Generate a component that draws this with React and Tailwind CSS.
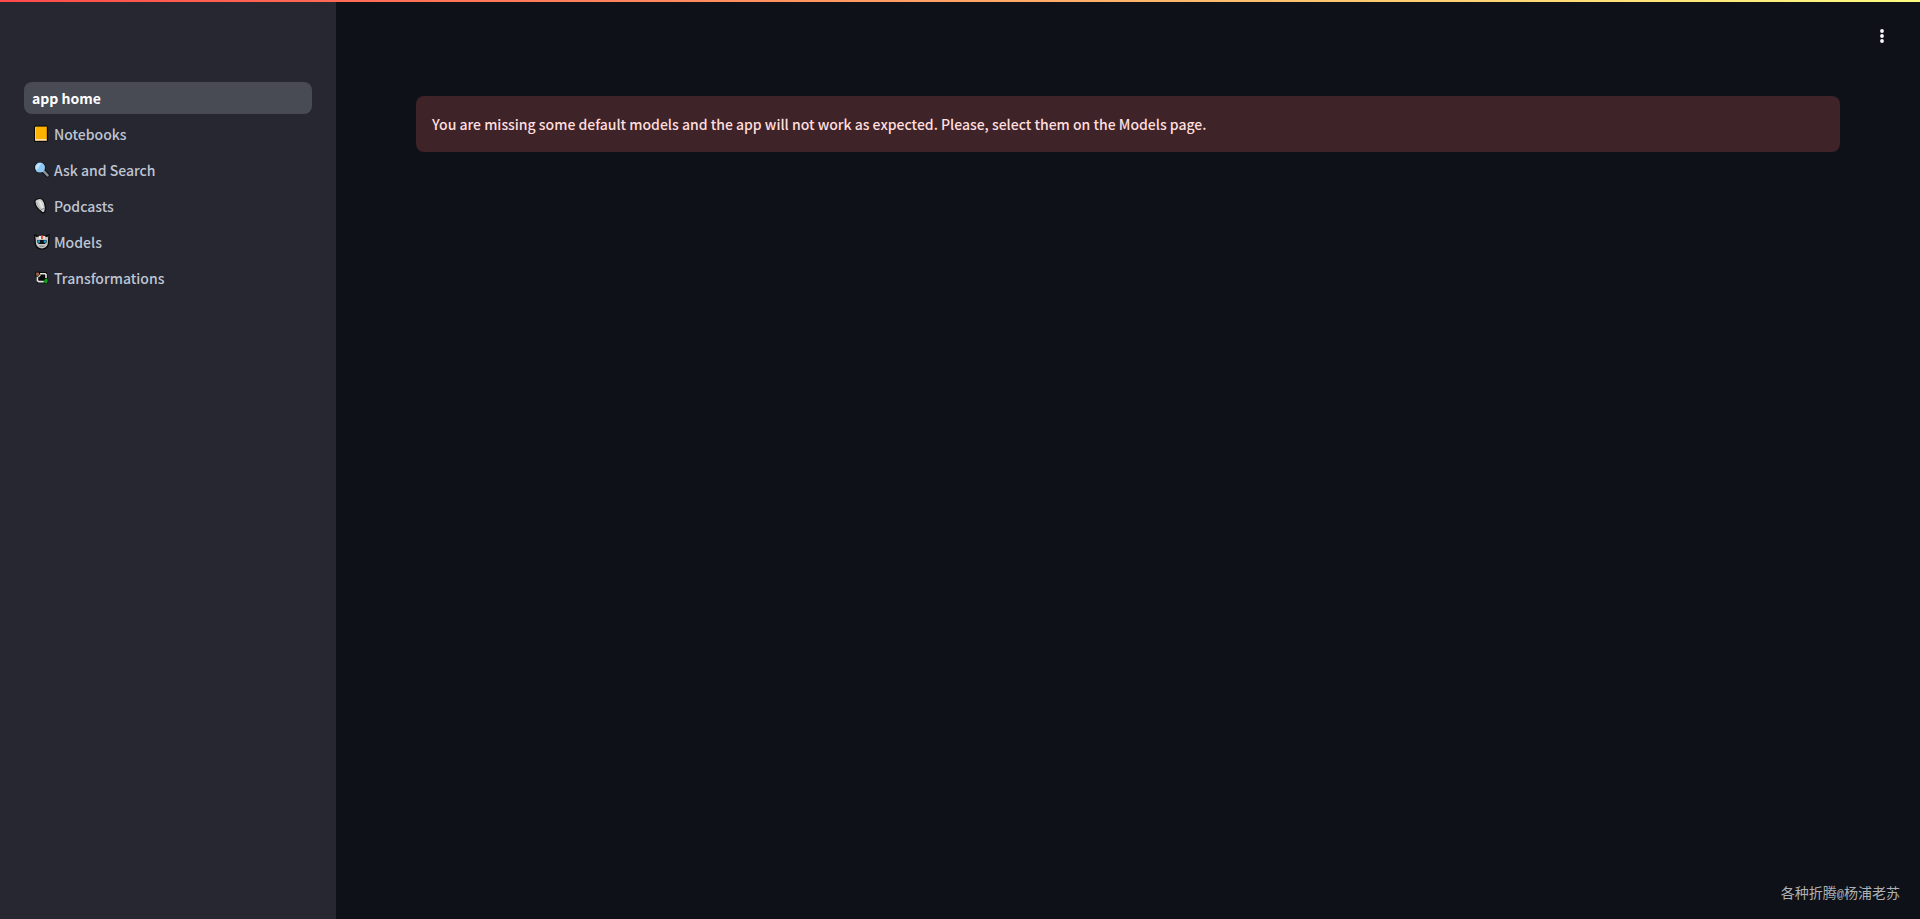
function NotebookIcon() {
  return (
    <svg viewBox="0 0 16 18" className="h-[18px] w-4" aria-hidden="true">
      <rect x="0" y="0.6" width="13.8" height="16.4" rx="1.6" fill="#0b0a08" />
      <rect x="1" y="1.800" width="1.400" height="14" fill="#ffcf60" />
      <rect x="2" y="1.600" width="10.800" height="12.600" fill="#ffb300" />
      <rect x="2" y="14" width="10.800" height="1.800" fill="#ffe0a0" />
    </svg>
  );
}

function SearchIcon() {
  return (
    <svg viewBox="0 0 16 18" className="h-[18px] w-4" aria-hidden="true">
      <path d="M9.400 10 13.400 14.200" stroke="#101214" strokeWidth="4.600" strokeLinecap="round" />
      <circle cx="6" cy="6.600" r="5.900" fill="#15181c" />
      <path d="M9.600 10.200 13.600 14.400" stroke="#84949a" strokeWidth="2.400" strokeLinecap="round" />
      <circle cx="6" cy="6.600" r="5" fill="#8fc8f2" />
      <path d="M1.800 7.800A4.600 4.600 0 0 1 7.400 2.200L2.800 9Z" fill="#c3e3fa" />
    </svg>
  );
}

function MicrophoneIcon() {
  return (
    <svg viewBox="0 0 16 18" className="h-[18px] w-4" aria-hidden="true">
      <path
        d="M1 3.600C2.600 1.200 6.800.8 8.800 2.800c1.800 2 2.800 5.600 2.600 9L10.800 14.600 8.800 16.200 6.600 14C3.200 11.600.6 7.800 1 3.600Z"
        fill="#d0d0d0"
        stroke="#0c0c0d"
        strokeWidth="1.200"
      />
      <path d="M2.400 5C3.200 8.600 4.800 11 6.600 12.600" stroke="#b8b8b9" strokeWidth="1.400" fill="none" />
      <path d="M5.600 4 8.600 11" stroke="#ececec" strokeWidth="1.600" />
      <path d="M7 12.600 11 11.200" stroke="#8d8d8f" strokeWidth="1" />
    </svg>
  );
}

function RobotIcon() {
  return (
    <svg viewBox="0 0 16 18" className="h-[18px] w-4" aria-hidden="true">
      <path
        d="M.7 1.800H1.600L2.600 3.400Q8 1.200 13 3.400L14 1.800H15L14.400 11Q13.400 15.600 7.900 16.200 2.400 15.600 1.300 11Z"
        fill="#c3c3c4"
        stroke="#09090a"
        strokeWidth="1.300"
      />
      <path d="M5 2.800H10.800V6H5Z" fill="#f1e8e8" />
      <path d="M7 2.400H9V6H7Z" fill="#f04a32" />
      <path d="M3.200 7H12.600V9.600L10.800 11H5L3.200 9.600Z" fill="#101315" />
      <rect x="3.600" y="7.400" width="2.400" height="2.200" fill="#19aee0" />
      <rect x="9.800" y="7.400" width="2.400" height="2.200" fill="#19aee0" />
      <path d="M5.600 13.200H10.400" stroke="#77797a" strokeWidth="1" />
    </svg>
  );
}

function CycleIcon() {
  return (
    <svg viewBox="0 0 16 18" className="h-[18px] w-4" aria-hidden="true">
      <path d="M.8 3 5 2.400 7 3.200 12.800 3 13.600 8 14.400 12.400 12.600 15.200 9.600 14.200 3 14.200 2 8.800Z" fill="#09090a" />
      <path d="M1.600 3.800 5 3.400 5 6 2.800 7.600Z" fill="#9a6140" />
      <path d="M6 4.800H11.200L12 5.600V9" fill="none" stroke="#e5e3e0" strokeWidth="1.600" />
      <path d="M3.400 7.800V11.600L4.600 12.600H9.800" fill="none" stroke="#e5e3e0" strokeWidth="1.600" />
      <path d="M4.400 8 6.400 5.800" stroke="#c9c4bd" strokeWidth="1.400" />
      <path d="M10.400 10.800 13.200 9 13.800 12.200 12.400 14.800 10 13.200Z" fill="#14a01d" />
    </svg>
  );
}

const pages = [
  { label: "Notebooks", Icon: NotebookIcon },
  { label: "Ask and Search", Icon: SearchIcon },
  { label: "Podcasts", Icon: MicrophoneIcon },
  { label: "Models", Icon: RobotIcon },
  { label: "Transformations", Icon: CycleIcon },
];

function Sidebar() {
  return (
    <aside className="w-[336px] shrink-0 bg-[#262730] px-6 pt-20">
      <nav aria-label="Pages">
        <ul className="flex flex-col gap-1">
          <li>
            <a
              href="#home"
              aria-current="page"
              className="flex h-8 items-center rounded-lg bg-[#484a54] px-2 font-bold text-white"
            >
              app home
            </a>
          </li>
          {pages.map(({ label, Icon }) => (
            <li key={label}>
              <a href={`#${label}`} className="flex h-8 items-center gap-1 rounded-lg px-2.5 text-[#bfc5d3]">
                <Icon />
                {label}
              </a>
            </li>
          ))}
        </ul>
      </nav>
    </aside>
  );
}

export default function App() {
  return (
    <div className="flex min-h-screen flex-col bg-[#0e1117] font-['Noto_Sans_CJK_SC',sans-serif] text-[14px] leading-6 font-medium">
      <div className="h-0.5 bg-linear-to-r/srgb from-[#ff4b4b] to-[#fffd80]" />
      <div className="flex grow">
        <Sidebar />
        <div className="flex min-w-0 grow flex-col">
          <header className="flex h-[94px] justify-end pt-[18px] pr-[22px]">
            <button type="button" aria-label="Main menu" className="flex size-8 items-center justify-center text-[#fafafa]">
              <svg viewBox="0 0 16 16" className="size-4" fill="currentColor" aria-hidden="true">
                <circle cx="8" cy="3" r="1.900" />
                <circle cx="8" cy="8" r="1.900" />
                <circle cx="8" cy="13" r="1.900" />
              </svg>
            </button>
          </header>
          <main className="grow px-20">
            <div role="alert" className="rounded-lg bg-[#3e2328] p-4 text-[#ffdede]">
              You are missing some default models and the app will not work as expected. Please, select them on the
              Models page.
            </div>
          </main>
          <footer className="flex justify-end pr-5 pb-3 font-normal text-[#aeb0b3]">
            <p lang="zh-CN">
              各种折腾<span className="font-['Liberation_Mono',monospace] text-[12px]">@</span>杨浦老苏
            </p>
          </footer>
        </div>
      </div>
    </div>
  );
}
